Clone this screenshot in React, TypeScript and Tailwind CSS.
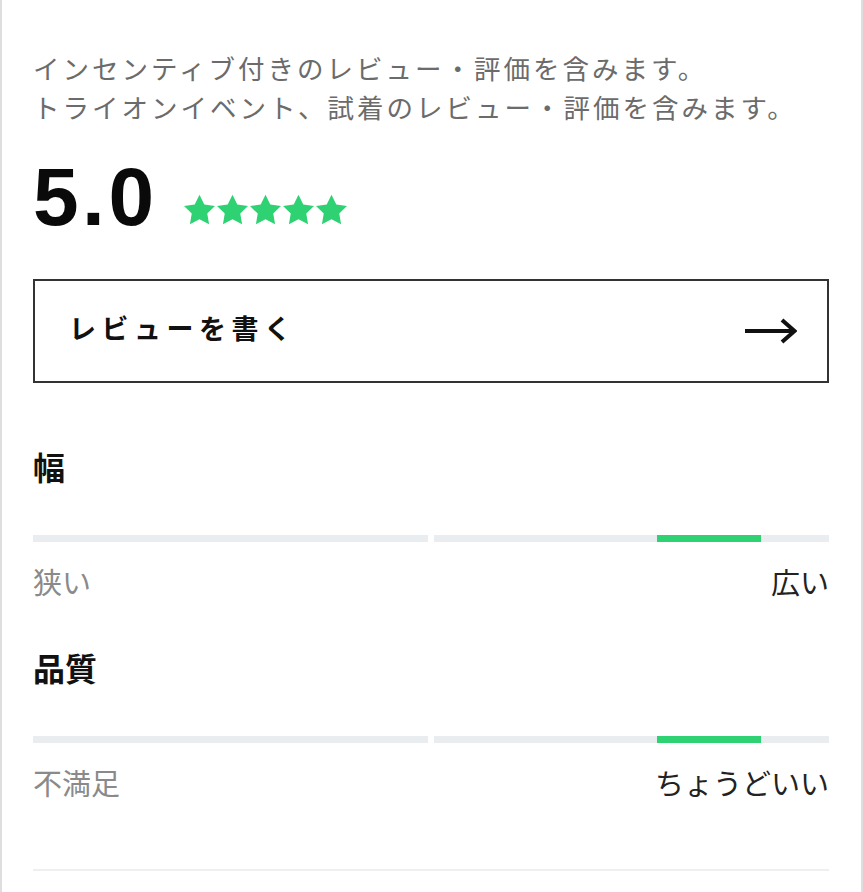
import React from 'react';

const JP = "font-['Noto_Sans_CJK_JP','Noto_Sans',sans-serif]";

const STAR_POINTS = '12,2 15.09,8.26 22,9.27 17,14.14 18.18,21.02 12,17.77 5.82,21.02 7,14.14 2,9.27 8.91,8.26';

function Stars({ count }: { count: number }) {
  return (
    <div className="flex gap-[2px] mb-[13px] ml-[26px]">
      {Array.from({ length: count }).map((_, i) => (
        <svg key={i} viewBox="2 1.5 20 20" className="w-[31px] h-[31px]">
          <polygon points={STAR_POINTS} fill="#2fd273" />
        </svg>
      ))}
    </div>
  );
}

function ArrowRight() {
  return (
    <svg width="52" height="26" viewBox="0 0 52 26" fill="none">
      <path d="M0 13H49" stroke="#111" strokeWidth="4" />
      <path d="M37 2L49.5 13L37 24" stroke="#111" strokeWidth="4" strokeLinejoin="miter" />
    </svg>
  );
}

function FitRow({ title, low, high }: { title: string; low: string; high: string }) {
  return (
    <div>
      <h3 className={`${JP} text-[32px] leading-[36px] font-bold text-[#111]`}>{title}</h3>
      <div className="mt-[51px] flex gap-[6px]">
        <div className="flex-1 h-[7px] bg-[#e9edf0]" />
        <div className="relative flex-1 h-[7px] bg-[#e9edf0]">
          <div className="absolute top-0 left-[56.5%] w-[26.3%] h-full bg-[#2fd273]" />
        </div>
      </div>
      <div className={`${JP} mt-[21px] flex justify-between text-[29px] leading-[36px]`}>
        <span className="text-[#8a8a8a]">{low}</span>
        <span className="text-[#222]">{high}</span>
      </div>
    </div>
  );
}

export default function App() {
  return (
    <div className="min-h-[892px] bg-white border-x-2 border-[#dedede]">
      <div className="pl-[31px] pr-[32px] pt-[48px]">
        <p className={`${JP} text-[26.5px] leading-[39px] tracking-[3px] text-[#6b6b6b] whitespace-nowrap`}>
          インセンティブ付きのレビュー・評価を含みます。
          <br />
          トライオンイベント、試着のレビュー・評価を含みます。
        </p>

        <div className="mt-[30px] flex items-end">
          <span className="font-['Liberation_Sans',Arial,sans-serif] text-[82px] leading-none font-bold tracking-[3.5px] text-[#0a0a0a]">
            5.0
          </span>
          <Stars count={5} />
        </div>

        {/* write review */}
        <button className="mt-[41px] w-full h-[104px] border-2 border-[#333] flex items-center justify-between pl-[34px] pr-[30px]">
          <span className={`${JP} text-[27px] font-bold tracking-[5.5px] text-[#111] -mt-[6px]`}>
            レビューを書く
          </span>
          <ArrowRight />
        </button>

        <div className="mt-[65px]">
          <FitRow title="幅" low="狭い" high="広い" />
        </div>
        <div className="mt-[50px]">
          <FitRow title="品質" low="不満足" high="ちょうどいい" />
        </div>

        <div className="mt-[69px] h-[2px] bg-[#efefef]" />
      </div>
    </div>
  );
}
